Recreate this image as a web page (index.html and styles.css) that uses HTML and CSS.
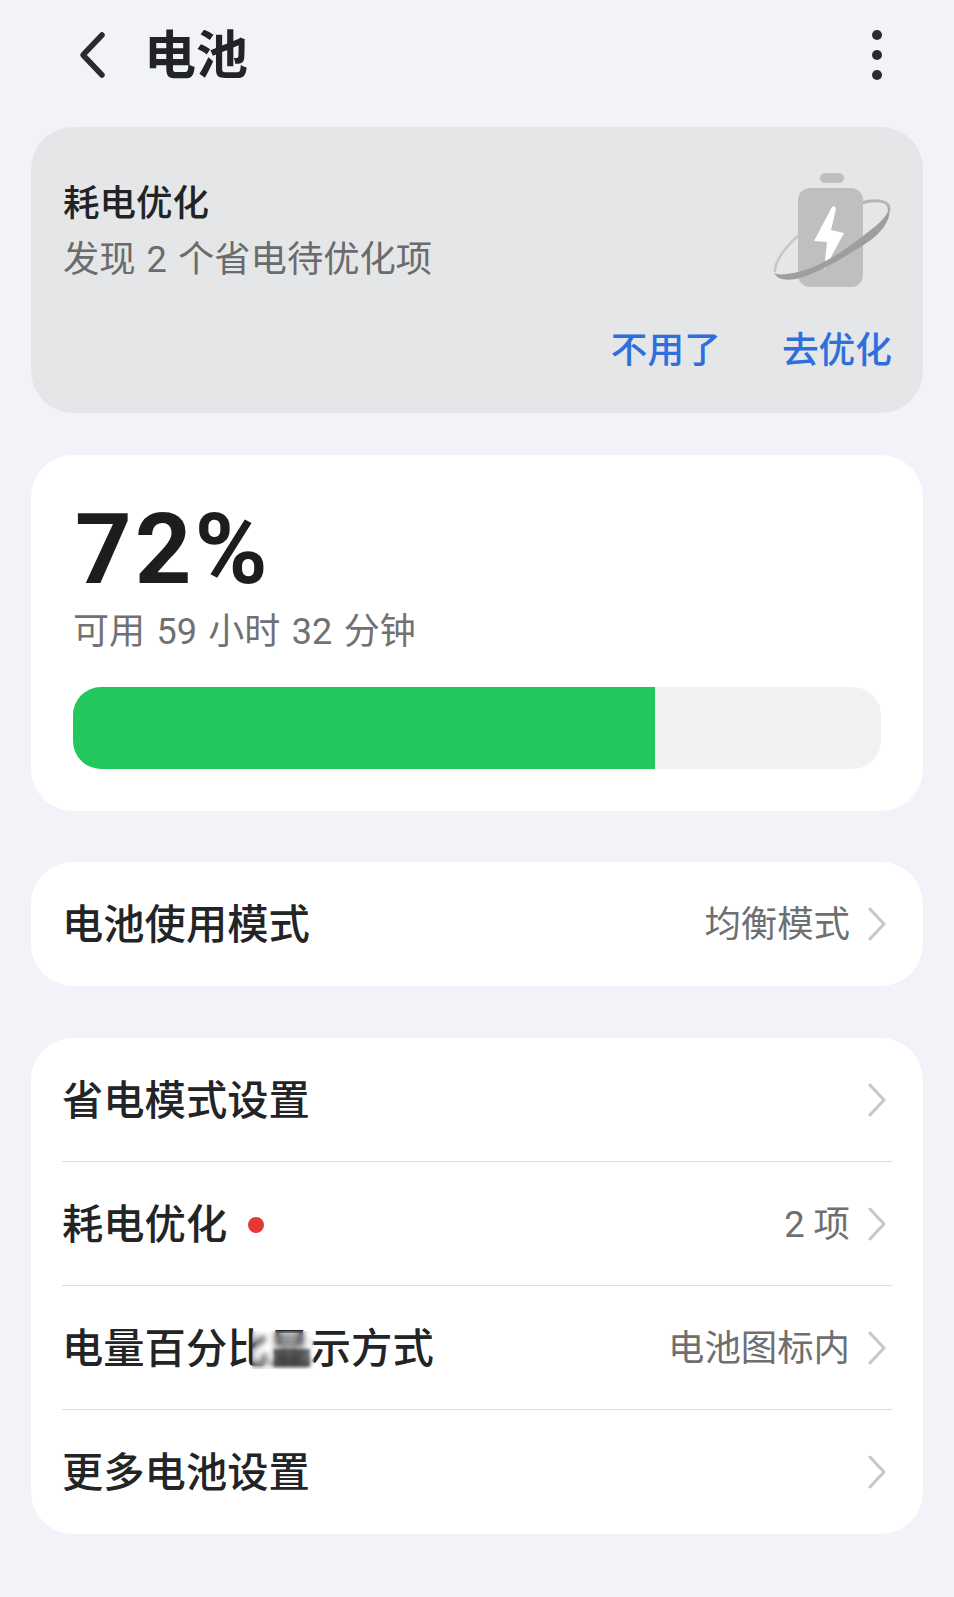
FILE: index.html

```html
<!DOCTYPE html>
<html lang="zh-CN">
<head>
  <meta charset="UTF-8" />
  <title>电池</title>
  <link rel="stylesheet" href="styles.css">
</head>
<body>
  <header class="topbar">
    <svg class="back" width="30" height="50" viewBox="0 0 30 50">
      <path d="M25 5 L6 25 L25 45" fill="none" stroke="#2a2b2d" stroke-width="5.5" stroke-linecap="round" stroke-linejoin="round"/>
    </svg>
    <h1>电池</h1>
    <div class="more"><span></span><span></span><span></span></div>
  </header>

  <section class="card tip">
    <div class="tip-top">
      <div>
        <p class="tip-title">耗电优化</p>
        <p class="tip-sub">发现 2 个省电待优化项</p>
      </div>
      <svg class="tip-icon" width="125" height="120" viewBox="0 0 125 120">
        <path d="M5 102 C4 92 16 76 30 64" fill="none" stroke="#c6c7c9" stroke-width="2.5"/>
        <path d="M91 33 C106 29 121 30 119 41" fill="none" stroke="#b4b5b7" stroke-width="3"/>
        <rect x="50" y="3" width="24" height="10" rx="5" fill="#bebfc1"/>
        <rect x="28" y="18" width="65" height="99" rx="12" fill="#bebfc1"/>
        <path d="M62 37 L44 71 L57 72 L54 100 L74 63 L61 60 L66 39 Q65 35 62 37 Z" fill="#fff"/>
        <path d="M4 100 C3 106 14 105 28 102 C50 97 75 80 93 66 C106 56 117 48 119 38 C122 50 110 65 95 74 C75 87 50 102 30 108 C18 111 5 111 4 100 Z" fill="#9d9ea0"/>
      </svg>
    </div>
    <div class="tip-actions">
      <span>不用了</span>
      <span>去优化</span>
    </div>
  </section>

  <section class="card level">
    <div class="percent">72%</div>
    <p class="remain">可用 59 小时 32 分钟</p>
    <div class="bar"><div class="bar-fill" style="width: 72%"></div></div>
  </section>

  <section class="card list single">
    <div class="row">
      <span class="row-label">电池使用模式</span>
      <span class="row-value">均衡模式</span>
      <svg class="chev" width="18" height="34" viewBox="0 0 18 34"><path d="M2 2 L16 17 L2 32" /></svg>
    </div>
  </section>

  <section class="card list">
    <div class="row">
      <span class="row-label">省电模式设置</span>
      <svg class="chev" width="18" height="34" viewBox="0 0 18 34"><path d="M2 2 L16 17 L2 32" /></svg>
    </div>
    <div class="row">
      <span class="row-label">耗电优化</span>
      <span class="dot"></span>
      <span class="row-value">2 项</span>
      <svg class="chev" width="18" height="34" viewBox="0 0 18 34"><path d="M2 2 L16 17 L2 32" /></svg>
    </div>
    <div class="row">
      <span class="row-label">电量百分<span class="masked">比显<i class="mask"></i></span>示方式</span>
      <span class="row-value">电池图标内</span>
      <svg class="chev" width="18" height="34" viewBox="0 0 18 34"><path d="M2 2 L16 17 L2 32" /></svg>
    </div>
    <div class="row">
      <span class="row-label">更多电池设置</span>
      <svg class="chev" width="18" height="34" viewBox="0 0 18 34"><path d="M2 2 L16 17 L2 32" /></svg>
    </div>
  </section>
</body>
</html>
```

FILE: styles.css

```css
* {
  box-sizing: border-box;
}
body {
  margin: 0;
  padding: 0 31px;
  background-color: #f1f3f8;
  color: #222325;
  font-family: Roboto, "Noto Sans CJK SC", sans-serif;
}
p, h1 {
  margin: 0;
}
.topbar {
  display: flex;
  align-items: center;
  height: 127px;
  padding: 0 41px 17px 46px;
}
.back {
  margin-right: 37px;
}
.topbar h1 {
  padding-top: 4px;
  font-size: 52px;
  font-weight: 700;
  line-height: 60px;
}
.more {
  margin-left: auto;
  display: flex;
  flex-direction: column;
  gap: 10px;
}
.more span {
  width: 10px;
  height: 10px;
  border-radius: 50%;
  background-color: #2a2b2d;
}
.card {
  background-color: white;
  border-radius: 42px;
}
.tip {
  display: flex;
  flex-direction: column;
  height: 286px;
  margin-bottom: 42px;
  padding: 49px 31px 39px 32px;
  background-color: #e5e6e8;
}
.tip-top {
  display: flex;
  justify-content: space-between;
  align-items: flex-start;
}
.tip-title {
  font-size: 36.5px;
  font-weight: 500;
  line-height: 56px;
}
.tip-sub {
  font-size: 36.3px;
  word-spacing: 2px;
  line-height: 56px;
  color: #6a6b6d;
}
.tip-icon {
  margin-top: -6px;
  margin-right: -3px;
}
.tip-actions {
  margin-top: auto;
  display: flex;
  justify-content: flex-end;
  gap: 61px;
  font-size: 36.7px;
  font-weight: 500;
  line-height: 46px;
  color: #2f6fdc;
}
.level {
  height: 356px;
  margin-bottom: 51px;
  padding: 44px 42px 0;
}
.percent {
  font-size: 99px;
  font-weight: 700;
  line-height: 100px;
  letter-spacing: 3px;
  padding-left: 2px;
  color: #1d1d1f;
}
.remain {
  font-size: 36px;
  word-spacing: 2.5px;
  line-height: 50px;
  margin-top: 8px;
  color: #707173;
}
.bar {
  height: 82px;
  margin-top: 30px;
  border-radius: 28px;
  background-color: #f2f2f3;
  overflow: hidden;
}
.bar-fill {
  height: 100%;
  background-color: #23c85c;
}
.list {
  padding: 0 31px;
}
.single {
  margin-bottom: 52px;
}
.row {
  display: flex;
  align-items: center;
  height: 124px;
  border-bottom: 1px solid #dcdcde;
}
.row:last-child {
  border-bottom: none;
}
.row-label {
  padding-top: 2px;
  font-size: 41.3px;
  font-weight: 500;
  line-height: 50px;
  color: #232426;
}
.row-value {
  margin-left: auto;
  padding-top: 2px;
  font-size: 36.4px;
  line-height: 50px;
  color: #6e6f71;
}
.chev {
  margin-left: 18px;
  margin-right: 6px;
}
.row-label + .chev {
  margin-left: auto;
}
.chev path {
  fill: none;
  stroke: #c6c6c8;
  stroke-width: 3;
  stroke-linecap: round;
  stroke-linejoin: round;
}
.dot {
  width: 16px;
  height: 16px;
  margin-left: 21px;
  margin-top: 3px;
  border-radius: 50%;
  background-color: #e53935;
}
.masked {
  position: relative;
}
.mask {
  position: absolute;
  left: 25px;
  top: 6px;
  width: 62px;
  height: 38px;
  backdrop-filter: blur(3px);
}
.mask::after {
  content: "";
  position: absolute;
  left: 22px;
  top: 18px;
  width: 36px;
  height: 18px;
  background-color: rgba(40, 40, 40, 0.65);
  filter: blur(1.5px);
}
```
